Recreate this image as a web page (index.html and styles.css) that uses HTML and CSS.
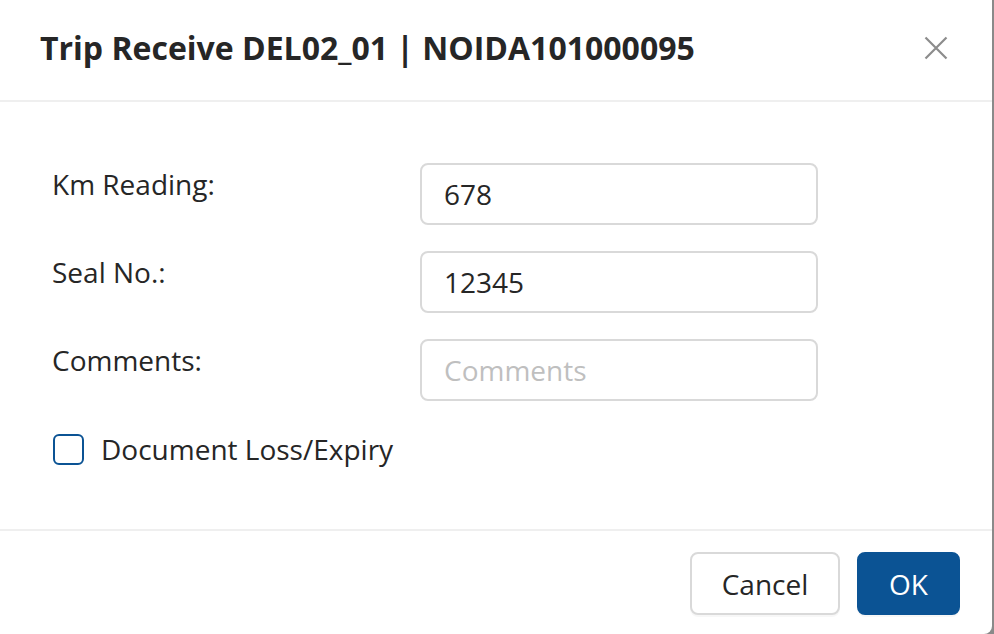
FILE: index.html
```html
<!DOCTYPE html>
<html>
<head>
<meta charset="utf-8">
<link rel="stylesheet" href="styles.css">
</head>
<body>
<div class="modal">
  <div class="modal-header">
    <h1 class="modal-title">Trip Receive DEL02_01 | NOIDA101000095</h1>
    <button class="close-btn" aria-label="Close">
      <svg width="24" height="24" viewBox="0 0 24 24"><path d="M1.5 1.5 L22.5 22.5 M22.5 1.5 L1.5 22.5" stroke="#8c8c8c" stroke-width="2.2" fill="none"/></svg>
    </button>
  </div>
  <div class="modal-body">
    <div class="form-grid">
      <label class="form-label">Km Reading:</label>
      <div class="input">678</div>
      <label class="form-label">Seal No.:</label>
      <div class="input">12345</div>
      <label class="form-label">Comments:</label>
      <div class="input placeholder">Comments</div>
    </div>
    <div class="check-row">
      <span class="checkbox"></span>
      <span class="check-label">Document Loss/Expiry</span>
    </div>
  </div>
  <div class="modal-footer">
    <button class="btn btn-default">Cancel</button>
    <button class="btn btn-primary">OK</button>
  </div>
</div>
</body>
</html>
```

FILE: styles.css
```css
html, body {
  margin: 0;
  padding: 0;
}
body {
  background: #8a8a8a;
  width: 994px;
  height: 634px;
  overflow: hidden;
  font-family: "Open Sans", "Noto Sans", sans-serif;
  color: #262626;
}
.modal {
  width: 992px;
  height: 634px;
  background: #fff;
  border-radius: 0 0 8px 0;
  display: flex;
  flex-direction: column;
}
.modal-header {
  box-sizing: border-box;
  height: 102px;
  border-bottom: 2px solid #efefef;
  display: flex;
  align-items: center;
  justify-content: space-between;
  padding: 0 44px 0 40px;
}
.modal-title {
  margin: 0;
  font-size: 32px;
  font-weight: 700;
  line-height: 44px;
  color: #262626;
  padding-bottom: 5px;
}
.close-btn {
  border: 0;
  background: none;
  padding: 0;
  width: 24px;
  height: 24px;
  display: flex;
  margin-bottom: 4px;
}
.modal-body {
  height: 429px;
  box-sizing: border-box;
  border-bottom: 2px solid #efefef;
  padding: 61px 0 0 52px;
}
.form-grid {
  display: grid;
  grid-template-columns: 368px 398px;
  row-gap: 26px;
}
.form-label {
  font-size: 28px;
  line-height: 42px;
  color: #262626;
}
.input {
  height: 62px;
  box-sizing: border-box;
  border: 2px solid #d9d9d9;
  border-radius: 8px;
  padding: 0 22px;
  display: flex;
  align-items: center;
  font-size: 28px;
  color: #262626;
}
.input.placeholder {
  color: #bfbfbf;
}
.check-row {
  display: flex;
  align-items: center;
  margin-top: 32px;
  padding-left: 1px;
}
.checkbox {
  width: 31px;
  height: 31px;
  box-sizing: border-box;
  border: 2px solid #0b5394;
  border-radius: 6px;
  margin-right: 17px;
}
.check-label {
  font-size: 28px;
  line-height: 32px;
}
.modal-footer {
  display: flex;
  justify-content: flex-end;
  gap: 17px;
  padding: 21px 32px 0 0;
}
.btn {
  height: 63px;
  box-sizing: border-box;
  border-radius: 8px;
  font-family: "Open Sans", "Noto Sans", sans-serif;
  font-size: 28px;
  padding: 0;
  box-shadow: 0 2px 0 rgba(0,0,0,0.03);
}
.btn-default {
  width: 150px;
  background: #fff;
  border: 2px solid #d9d9d9;
  color: #262626;
}
.btn-primary {
  width: 103px;
  background: #0b5394;
  border: 2px solid #0b5394;
  color: #fff;
}
```
